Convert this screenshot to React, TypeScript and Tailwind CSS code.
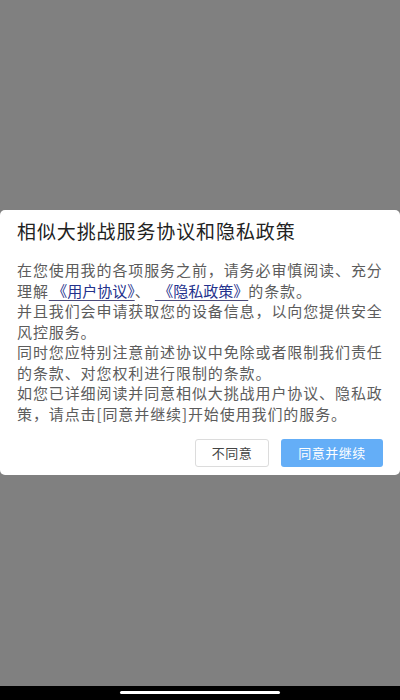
import React from 'react'

const font = { fontFamily: '"Noto Sans CJK SC", "Noto Sans", sans-serif' }

export default function App() {
  return (
    <div className="flex h-[700px] w-[400px] flex-col bg-[#808080]" style={font}>
      <div className="flex flex-1 flex-col pt-[210px]">
        <div className="rounded-[5px] bg-white pt-[7px] pb-[8px]">
          <h1 className="px-[17px] text-[19px] leading-[28px] font-normal tracking-[0.9px] text-[#222222]">
            相似大挑战服务协议和隐私政策
          </h1>
          <div className="mt-[15px] pl-[17px] pr-[14px] text-[15px] leading-[20.5px] tracking-[0.9px] text-[#5c5c5c]">
            <p>
              在您使用我的各项服务之前，请务必审慎阅读、充分理解
              <span className="tracking-normal text-[#23318c] underline decoration-[#4a4a7a] underline-offset-[3px]">&nbsp;《用户协议》</span>
              <span>、&nbsp;</span>
              <span className="tracking-normal text-[#23318c] underline decoration-[#4a4a7a] underline-offset-[3px]">&nbsp;《隐私政策》</span>
              的条款。
            </p>
            <p>并且我们会申请获取您的设备信息，以向您提供安全风控服务。</p>
            <p>同时您应特别注意前述协议中免除或者限制我们责任的条款、对您权利进行限制的条款。</p>
            <p>如您已详细阅读并同意相似大挑战用户协议、隐私政策，请点击[同意并继续]开始使用我们的服务。</p>
          </div>
          <div className="mt-[15px] flex justify-end gap-[12px] pr-[17px]">
            <button className="h-[28px] w-[74px] rounded-[3px] border border-[#dcdcdc] bg-white text-[13px] tracking-[0.5px] text-[#444444]">
              不同意
            </button>
            <button className="h-[28px] w-[102px] rounded-[3px] bg-[#64aef7] text-[13px] tracking-[0.5px] text-white">
              同意并继续
            </button>
          </div>
        </div>
      </div>
      <div className="flex h-[14px] items-start justify-center bg-black pt-[5px]">
        <div className="h-[3px] w-[160px] rounded-full bg-white" />
      </div>
    </div>
  )
}
